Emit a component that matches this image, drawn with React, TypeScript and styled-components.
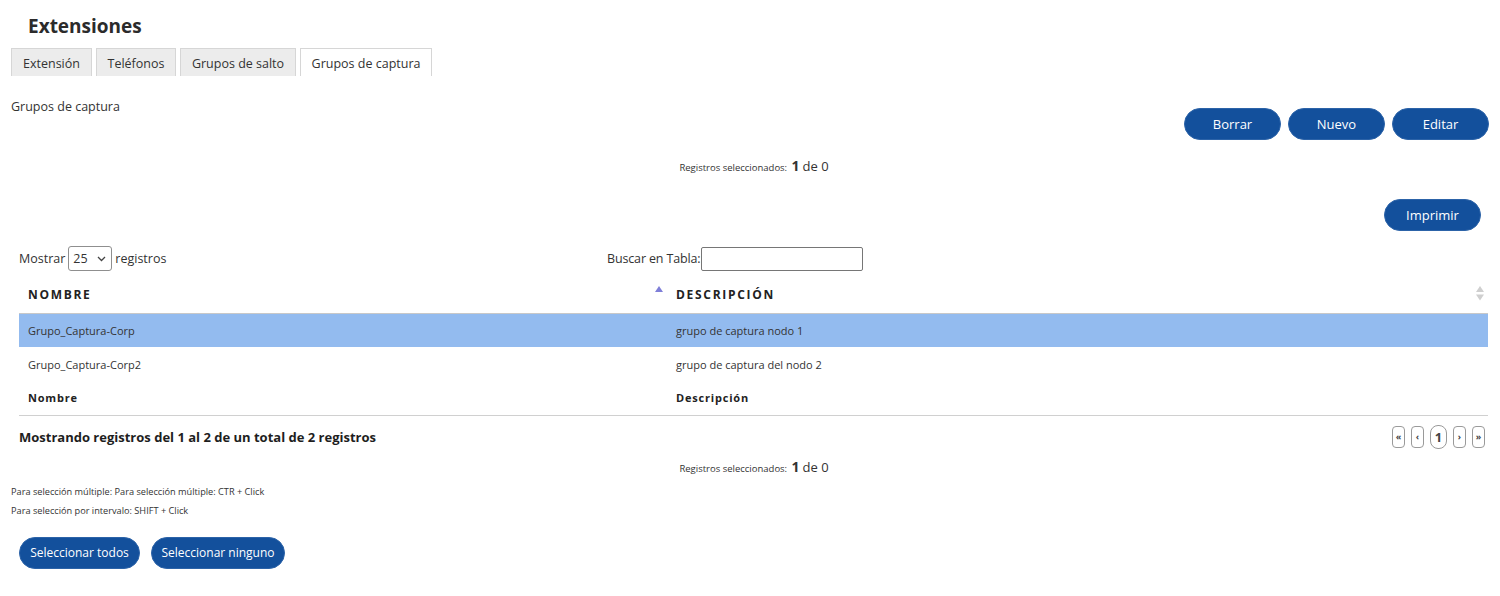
import React from "react";
import styled, { createGlobalStyle } from "styled-components";

const Global = createGlobalStyle`
  html, body { margin: 0; padding: 0; background: #fff; }
  body { font-family: "Open Sans", "Noto Sans", sans-serif; color: #333; }
  * { box-sizing: border-box; }
`;

const Page = styled.div`
  width: 1500px;
  height: 596px;
  overflow: hidden;
  display: flex;
  flex-direction: column;
`;

const Title = styled.h1`
  margin: 14px 0 0 28px;
  font-size: 19px;
  line-height: 24px;
  font-weight: 700;
  color: #2b2b2b;
`;

const Tabs = styled.div`
  display: flex;
  gap: 4px;
  margin: 10px 0 0 11px;
`;

const Tab = styled.div<{ $active?: boolean; $w: number }>`
  width: ${(p) => p.$w}px;
  height: 28px;
  display: flex;
  align-items: center;
  justify-content: center;
  padding-top: 1px;
  font-size: 12.5px;
  color: #333;
  background: ${(p) => (p.$active ? "#fff" : "#ececec")};
  border: 1px solid #d6d6d6;
  border-bottom: none;
`;

const Section = styled.div`
  padding: 0 11px;
`;

const TopRow = styled.div`
  display: flex;
  justify-content: space-between;
  align-items: flex-start;
  margin-top: 23px;
`;

const SectionLabel = styled.div`
  font-size: 12.5px;
  line-height: 16px;
`;

const ButtonGroup = styled.div<{ $gap?: number }>`
  display: flex;
  gap: ${(p) => p.$gap ?? 7}px;
`;

const PillButton = styled.button<{ $w: number; $fs?: number }>`
  width: ${(p) => p.$w}px;
  height: 32px;
  border-radius: 16px;
  background: #13509c;
  border: 1px solid #2c63a8;
  color: #fff;
  font-family: "Open Sans", "Noto Sans", sans-serif;
  font-size: ${(p) => p.$fs ?? 13}px;
  padding: 0;
  cursor: pointer;
`;

const Actions = styled(ButtonGroup)`
  margin-top: 9px;
`;

const Counter = styled.div<{ $mt: number }>`
  margin-top: ${(p) => p.$mt}px;
  text-align: center;
  padding-left: 8px;
  font-size: 13px;
  line-height: 16px;
  color: #333;
`;

const CounterSmall = styled.span`
  font-size: 9.5px;
`;

const CounterNum = styled.b`
  font-size: 14px;
  font-weight: 700;
  margin: 0 3px 0 1px;
`;

const TableArea = styled.div`
  padding: 0 12px 0 19px;
`;

const PrintRow = styled.div`
  display: flex;
  justify-content: flex-end;
  margin-top: 23px;
  padding-right: 7px;
`;

const Controls = styled.div`
  display: grid;
  grid-template-columns: 588px auto;
  align-items: center;
  margin-top: 15px;
  font-size: 12.5px;
`;

const ControlGroup = styled.div`
  display: flex;
  align-items: center;
  gap: 3px;
`;

const SearchGroup = styled(ControlGroup)`
  gap: 0;
  letter-spacing: -0.15px;
`;

const Select = styled.div`
  width: 44px;
  height: 25px;
  border: 1px solid #8f8f8f;
  border-radius: 3px;
  display: flex;
  align-items: center;
  justify-content: space-between;
  padding: 0 5px 0 4px;
  font-size: 12.5px;
`;

const SearchInput = styled.div`
  width: 162px;
  height: 24px;
  margin-left: 1px;
  border: 1px solid #767676;
  border-radius: 2px;
`;

const Table = styled.table`
  width: 100%;
  border-collapse: collapse;
  margin-top: 9px;
  table-layout: fixed;
`;

const Th = styled.th<{ $w?: number }>`
  width: ${(p) => (p.$w ? `${p.$w}px` : "auto")};
  position: relative;
  text-align: left;
  padding: 0 9px 3px;
  height: 33px;
  font-size: 12px;
  font-weight: 700;
  letter-spacing: 1.7px;
  color: #222;
  border-bottom: 1px solid #c8c8c8;
`;

const SortIcon = styled.svg`
  position: absolute;
  right: 4px;
  top: 6px;
`;

const Tr = styled.tr<{ $selected?: boolean }>`
  background: ${(p) => (p.$selected ? "#93bbef" : "#fff")};
`;

const Td = styled.td`
  padding: 0 9px;
  height: 34px;
  font-size: 11px;
  color: #333;
`;

const Tf = styled.td`
  padding: 0 9px;
  height: 34px;
  font-size: 11px;
  font-weight: 700;
  letter-spacing: 0.8px;
  color: #222;
  border-bottom: 1px solid #d0d0d0;
`;

const InfoRow = styled.div`
  display: flex;
  justify-content: space-between;
  align-items: center;
  margin-top: 9px;
  padding-right: 3px;
`;

const Info = styled.div`
  font-size: 13px;
  font-weight: 700;
  color: #1e1e1e;
`;

const Pager = styled.div`
  display: flex;
  align-items: center;
  gap: 6px;
`;

const PageBtn = styled.div<{ $current?: boolean }>`
  width: ${(p) => (p.$current ? 17 : 13)}px;
  height: ${(p) => (p.$current ? 24 : 22)}px;
  border: 1px solid #9a9a9a;
  border-radius: ${(p) => (p.$current ? "8px" : "4px")};
  display: flex;
  align-items: center;
  justify-content: center;
  font-size: ${(p) => (p.$current ? 13 : 9)}px;
  font-weight: 700;
  color: #444;
`;

const Hints = styled.div`
  margin-top: 8px;
  display: flex;
  flex-direction: column;
  gap: 5px;
  font-size: 9.2px;
  line-height: 14px;
  color: #333;
`;

const BottomButtons = styled(ButtonGroup)`
  margin: 19px 0 0 8px;
`;

const Chevron = () => (
  <svg width="9" height="6" viewBox="0 0 9 6">
    <path d="M1 1l3.5 3.5L8 1" fill="none" stroke="#444" strokeWidth="1.3" />
  </svg>
);

const CounterLine = ({ mt }: { mt: number }) => (
  <Counter $mt={mt}>
    <CounterSmall>Registros seleccionados:</CounterSmall> <CounterNum>1</CounterNum>de 0
  </Counter>
);

export default function App() {
  return (
    <Page>
      <Global />
      <Title>Extensiones</Title>
      <Tabs>
        <Tab $w={81}>Extensión</Tab>
        <Tab $w={80}>Teléfonos</Tab>
        <Tab $w={116}>Grupos de salto</Tab>
        <Tab $w={132} $active>
          Grupos de captura
        </Tab>
      </Tabs>
      <Section>
        <TopRow>
          <SectionLabel>Grupos de captura</SectionLabel>
          <Actions>
            <PillButton $w={97}>Borrar</PillButton>
            <PillButton $w={97}>Nuevo</PillButton>
            <PillButton $w={97}>Editar</PillButton>
          </Actions>
        </TopRow>
      </Section>
      <CounterLine mt={18} />
      <TableArea>
        <PrintRow>
          <PillButton $w={97}>Imprimir</PillButton>
        </PrintRow>
        <Controls>
          <ControlGroup>
            Mostrar
            <Select>
              25 <Chevron />
            </Select>
            registros
          </ControlGroup>
          <SearchGroup>
            Buscar en Tabla:
            <SearchInput />
          </SearchGroup>
        </Controls>
        <Table>
          <thead>
            <tr>
              <Th $w={648}>
                NOMBRE
                <SortIcon width="8" height="6" viewBox="0 0 8 6">
                  <path d="M4 0L8 6H0z" fill="#7f7fd8" />
                </SortIcon>
              </Th>
              <Th>
                DESCRIPCIÓN
                <SortIcon width="8" height="15" viewBox="0 0 8 15">
                  <path d="M4 0L8 6H0z" fill="#cfcfcf" />
                  <path d="M0 8.5h8L4 14.5z" fill="#cfcfcf" />
                </SortIcon>
              </Th>
            </tr>
          </thead>
          <tbody>
            <Tr $selected>
              <Td>Grupo_Captura-Corp</Td>
              <Td>grupo de captura nodo 1</Td>
            </Tr>
            <Tr>
              <Td>Grupo_Captura-Corp2</Td>
              <Td>grupo de captura del nodo 2</Td>
            </Tr>
          </tbody>
          <tfoot>
            <tr>
              <Tf>Nombre</Tf>
              <Tf>Descripción</Tf>
            </tr>
          </tfoot>
        </Table>
        <InfoRow>
          <Info>Mostrando registros del 1 al 2 de un total de 2 registros</Info>
          <Pager>
            <PageBtn>«</PageBtn>
            <PageBtn>‹</PageBtn>
            <PageBtn $current>1</PageBtn>
            <PageBtn>›</PageBtn>
            <PageBtn>»</PageBtn>
          </Pager>
        </InfoRow>
      </TableArea>
      <CounterLine mt={10} />
      <Section>
        <Hints>
          <div>Para selección múltiple: Para selección múltiple: CTR + Click</div>
          <div>Para selección por intervalo: SHIFT + Click</div>
        </Hints>
        <BottomButtons $gap={11}>
          <PillButton $w={121} $fs={12}>
            Seleccionar todos
          </PillButton>
          <PillButton $w={134} $fs={12}>
            Seleccionar ninguno
          </PillButton>
        </BottomButtons>
      </Section>
    </Page>
  );
}
